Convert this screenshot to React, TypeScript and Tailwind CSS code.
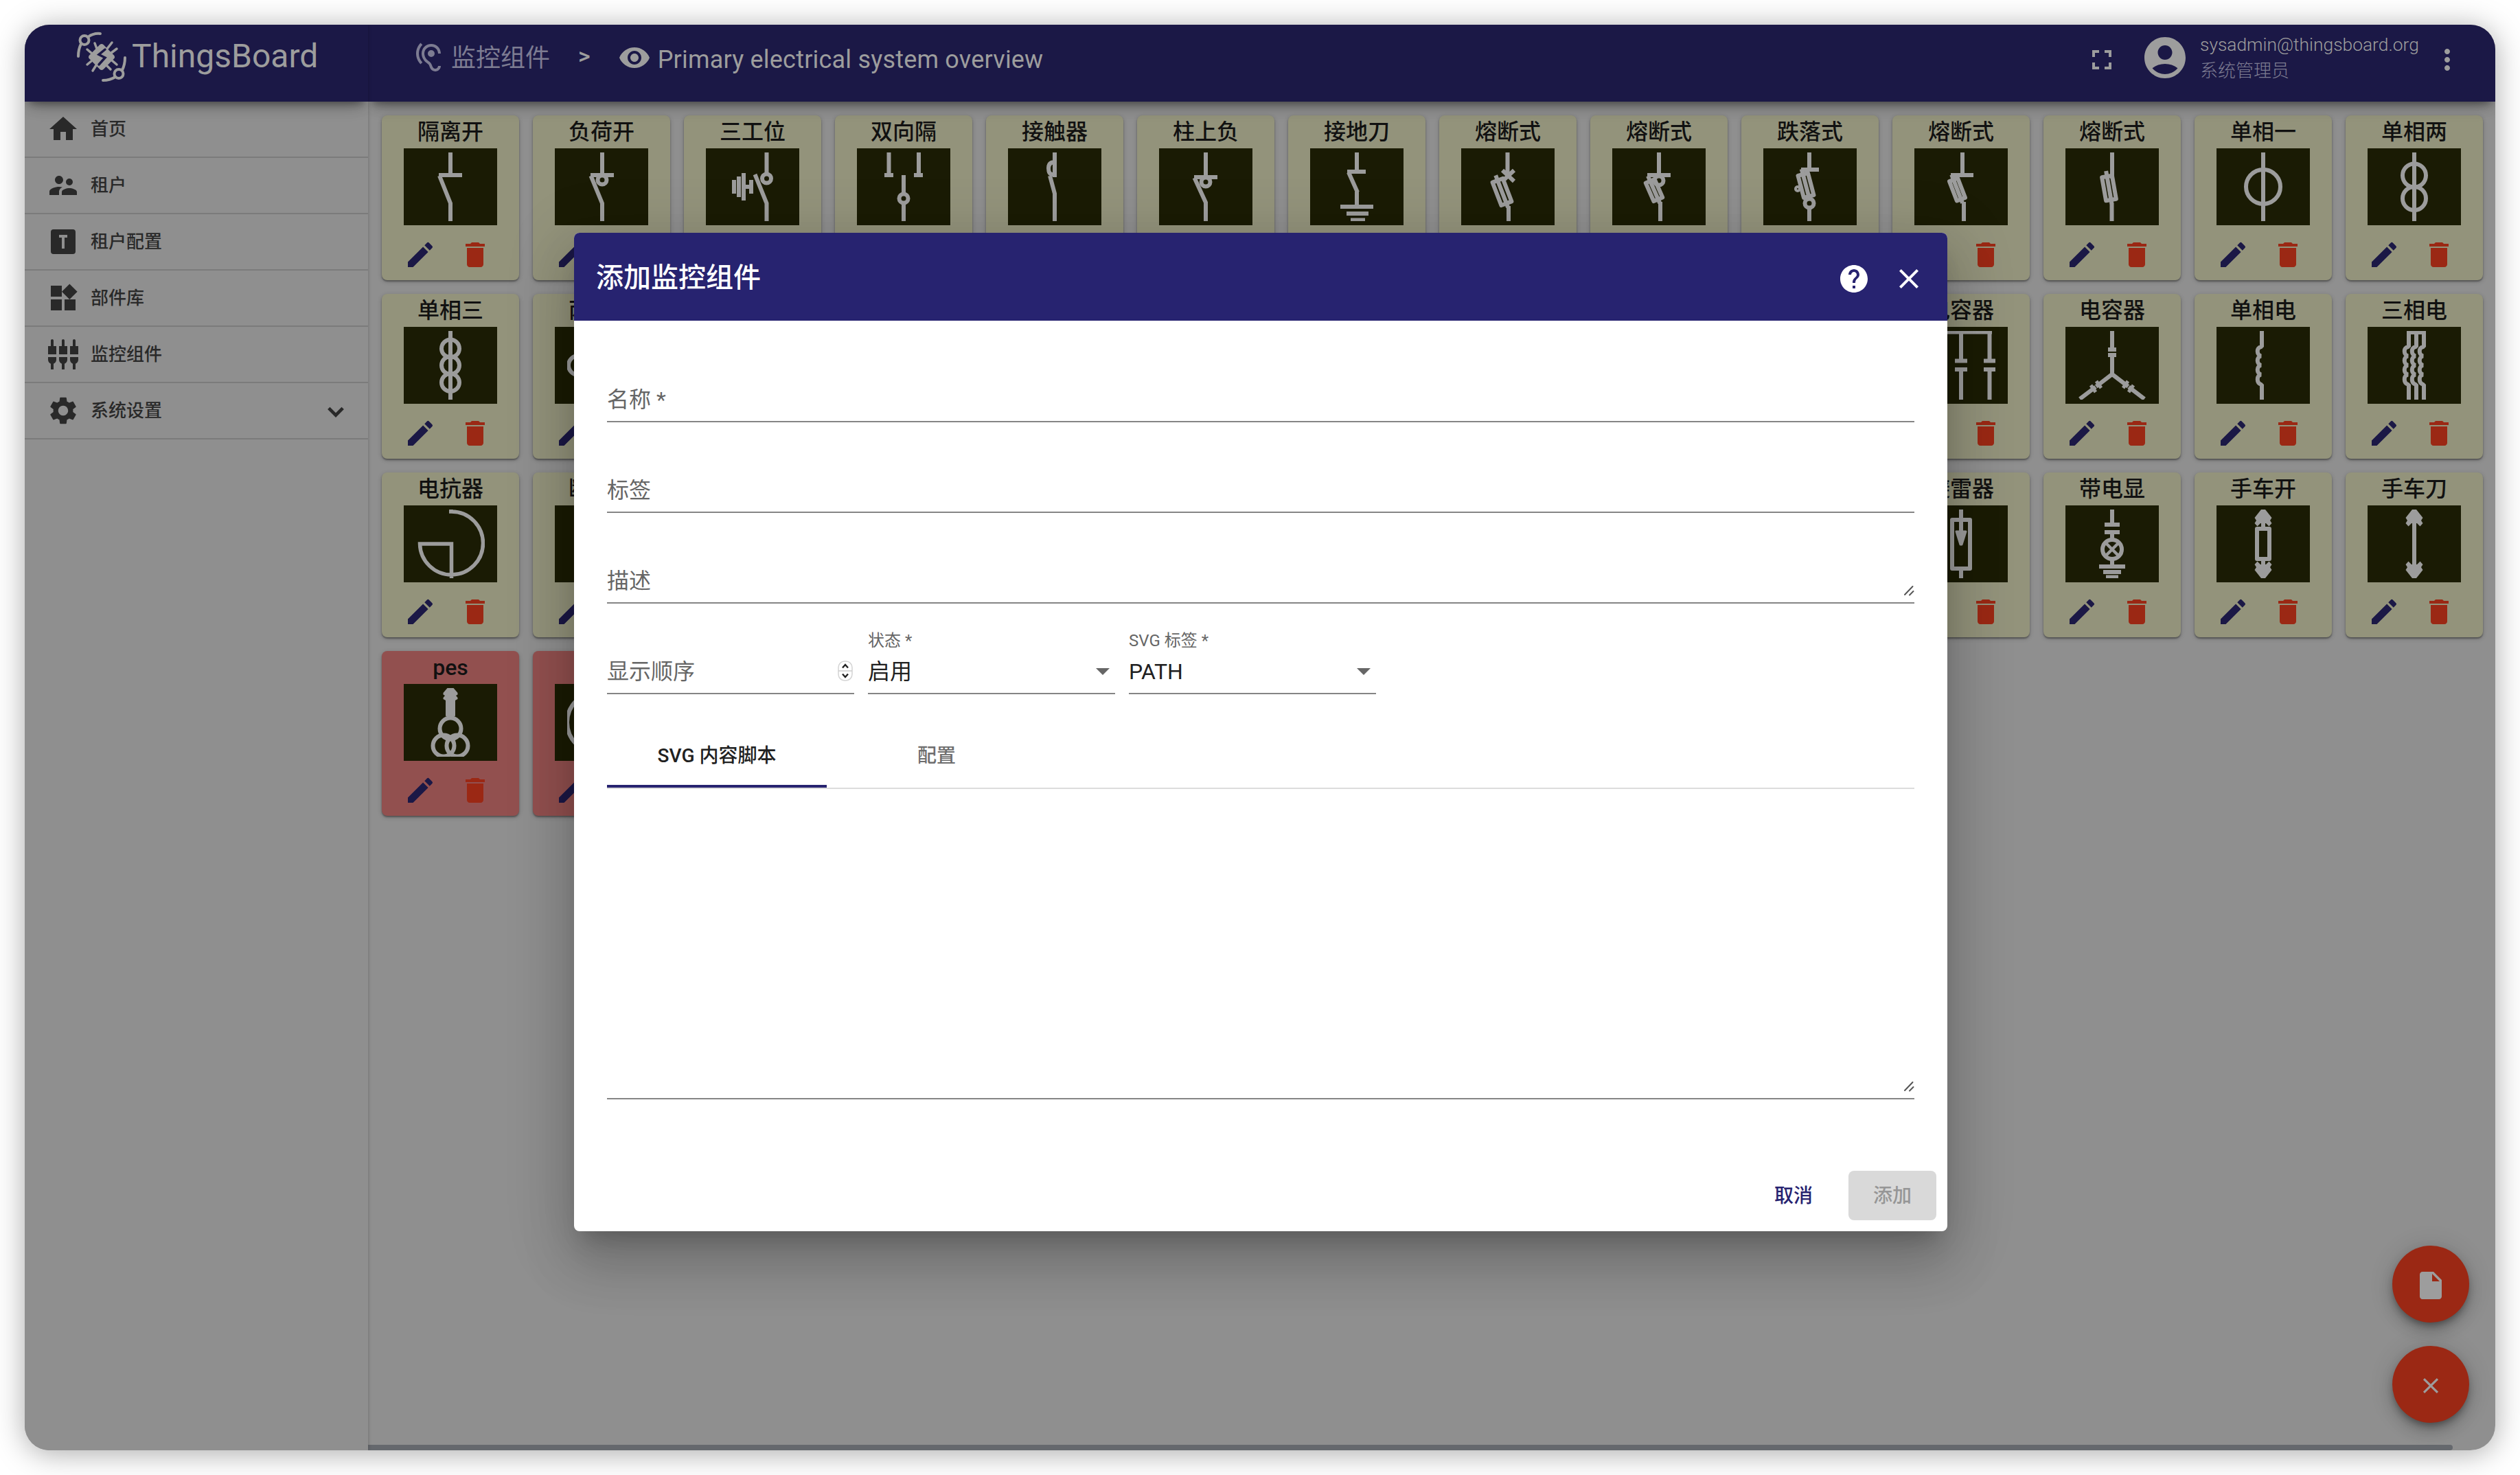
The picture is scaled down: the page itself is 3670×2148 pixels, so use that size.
import React from 'react';
import {
  MdHome,
  MdSupervisorAccount,
  MdWidgets,
  MdSettingsInputComponent,
  MdSettings,
  MdHearing,
  MdVisibility,
  MdFullscreen,
  MdAccountCircle,
  MdMoreVert,
  MdEdit,
  MdDelete,
  MdHelp,
  MdClose,
  MdInsertDriveFile,
} from 'react-icons/md';

const Fuse = ({ x1, y1, x2, y2, w = 16 }: { x1: number; y1: number; x2: number; y2: number; w?: number }) => {
  const len = Math.hypot(x2 - x1, y2 - y1);
  const angle = (Math.atan2(y2 - y1, x2 - x1) * 180) / Math.PI - 90;
  return (
    <g transform={`translate(${x1} ${y1}) rotate(${angle})`} strokeLinejoin="round">
      <rect x={-w / 2} y={3} width={w} height={len - 6} />
      <path d={`M0-5V${len + 3}`} />
    </g>
  );
};

const Coil = ({ x }: { x: number }) => (
  <path
    strokeLinejoin="bevel"
    d={`M${x} 6V29l-1 0c-7 1-7 12 0 13.500c-7 1-7 12 0 13.500c-7 1-7 12 0 13.500c-7 1-7 12 0 14.500l1 0V106`}
  />
);

const ArrowHead = ({ flip = false }: { flip?: boolean }) => (
  <path
    transform={flip ? 'matrix(1 0 0 -1 0 112)' : undefined}
    d="M65 6h6L80.500 18L78 22L80.500 26L76.500 30.500L72 26H64L59.500 30.500L55.500 26L58 22L55.500 18Z"
    fill="currentColor"
    stroke="none"
  />
);

const symbols: Record<string, React.ReactNode> = {
  isolator: <path d="M68 6V39M51 39H85M52 40L68 80V106" />,
  load: (
    <>
      <path d="M69 6V39M52 39H86M52.500 40L69 80V106" />
      <circle cx="69" cy="46" r="6.500" />
    </>
  ),
  threePos: (
    <>
      <path d="M88.500 6V36M71.500 38L88.500 80V106M41 46V66M48 41V71M55 36V76M55 56H66M66 46V66" />
      <circle cx="88.500" cy="44" r="6.500" />
    </>
  ),
  dual: (
    <>
      <path d="M46.500 6V39M90 6V39M40 39H53M83 39H96M68 39V66M68 82V106" />
      <circle cx="68" cy="73" r="6.500" />
    </>
  ),
  contactor: <path d="M68 6V42M68 20Q59 20 59 29Q59 38 65 38M61 40L68 66V106" />,
  poleLoad: (
    <>
      <path d="M68 6V42M51 42H85M51.500 43L68 79V106" />
      <circle cx="68" cy="49" r="6.500" />
    </>
  ),
  earth: <path d="M68 6V34M54 34H81M56 35L69 64M68 63V84M44 85H92M53 95H85M59 104.500H80" />,
  fuseX: (
    <>
      <path d="M67.500 6V36M60 32L77 48M77 32L60 48M69 84V106" />
      <Fuse x1={52} y1={44} x2={67} y2={83} />
    </>
  ),
  fuseCircle: (
    <>
      <path d="M68 6V39M51 39H85M70 78V106" />
      <circle cx="68" cy="47" r="6.500" />
      <Fuse x1={54} y1={45} x2={68} y2={77} w={14} />
    </>
  ),
  drop: (
    <>
      <path d="M67 6V31M55 31H81M67 87V106" />
      <circle cx="67" cy="80" r="6.500" />
      <circle cx="50" cy="59" r="2" />
      <Fuse x1={57} y1={35} x2={67} y2={73} w={15} />
    </>
  ),
  fuseBar: (
    <>
      <path d="M70 6V39M53 39H86M72 78V106" />
      <Fuse x1={56} y1={43} x2={69} y2={77} w={13} />
    </>
  ),
  fuse: (
    <>
      <path d="M68 6V44M67.500 80V106" />
      <Fuse x1={60} y1={38} x2={67} y2={78} w={15} />
    </>
  ),
  one: (
    <>
      <path d="M68 6V106" />
      <circle cx="68" cy="56" r="25" />
    </>
  ),
  two: (
    <>
      <path d="M68 6V106" />
      <circle cx="68" cy="39.500" r="17" />
      <circle cx="68" cy="73" r="17" />
    </>
  ),
  three: (
    <>
      <path d="M68 6V106" />
      <circle cx="68" cy="31.500" r="13" />
      <circle cx="68" cy="56" r="13" />
      <circle cx="68" cy="81" r="13" />
    </>
  ),
  smallRing: <circle cx="34" cy="56" r="14" />,
  bigRing: <circle cx="62" cy="56" r="44" />,
  capacitors: (
    <path d="M23 7.500H113M26.500 6V49M68 6V49M109.500 6V49M18 49.500H35M59 49.500H77M101 49.500H118M18 62H35M59 62H77M101 62H118M26.500 62V106M68 62V106M109.500 62V106" />
  ),
  capStar: (
    <g>
      <path d="M68 6V33M68 41V69L21 105M68 69L115 105M62 33H74M62 41H74" />
      <path d="M45 79L52 89M37 85L44 95M91 79L84 89M99 85L92 95" strokeWidth="5" />
      <path d="M41 83L48 92M95 83L88 92" stroke="#1a1b04" strokeWidth="1.200" />
    </g>
  ),
  coil: <Coil x={66} />,
  coils: (
    <>
      <path d="M57 8H85" />
      <Coil x={60} />
      <Coil x={71} />
      <Coil x={82} />
    </>
  ),
  reactor: <path d="M66 9H69.500A46 46 0 1 1 23.500 56H69.500V106M69 6V10" strokeWidth="5.500" />,
  arrester: (
    <>
      <path d="M68 6V40M68 95V106" />
      <rect x="55" y="21" width="26" height="71" strokeLinejoin="round" />
      <path d="M61 38H75L69 57H67Z" fill="currentColor" strokeWidth="3" strokeLinejoin="round" />
    </>
  ),
  lamp: (
    <>
      <path d="M68 6V28M57 28H79M57 39H79M68 39V50M68 79V88M49 89H87M55 97H81M59 104.500H77" />
      <circle cx="68" cy="64" r="14" />
      <path d="M58 54L78 74M78 54L58 74" strokeWidth="4.500" />
    </>
  ),
  cart: (
    <>
      <path d="M68 20V34M68 78V92" />
      <rect x="59" y="34" width="18" height="44" strokeLinejoin="round" />
      <ArrowHead />
      <ArrowHead flip />
    </>
  ),
  cartKnife: (
    <>
      <path d="M68 8V104" />
      <ArrowHead />
      <ArrowHead flip />
    </>
  ),
  pes: (
    <>
      <path
        d="M63.500 6H72.500L78.500 13V15.500L76 17L78.500 20V22L75 24V46Q75 47.500 73.500 47.500H62.500Q61 47.500 61 46V24L57.500 22V20L60 17L57.500 15.500V13Z"
        fill="currentColor"
        stroke="none"
      />
      <circle cx="68" cy="65" r="15.500" />
      <circle cx="58" cy="90" r="15.500" />
      <circle cx="78" cy="90" r="15.500" />
    </>
  ),
};

type CardData = { title: string; symbol?: string; red?: boolean } | null;

const hidden: CardData[] = Array(8).fill(null);

const cards: CardData[] = [
  { title: '隔离开', symbol: 'isolator' },
  { title: '负荷开', symbol: 'load' },
  { title: '三工位', symbol: 'threePos' },
  { title: '双向隔', symbol: 'dual' },
  { title: '接触器', symbol: 'contactor' },
  { title: '柱上负', symbol: 'poleLoad' },
  { title: '接地刀', symbol: 'earth' },
  { title: '熔断式', symbol: 'fuseX' },
  { title: '熔断式', symbol: 'fuseCircle' },
  { title: '跌落式', symbol: 'drop' },
  { title: '熔断式', symbol: 'fuseBar' },
  { title: '熔断式', symbol: 'fuse' },
  { title: '单相一', symbol: 'one' },
  { title: '单相两', symbol: 'two' },
  { title: '单相三', symbol: 'three' },
  { title: '两相三', symbol: 'smallRing' },
  ...hidden,
  { title: '电容器', symbol: 'capacitors' },
  { title: '电容器', symbol: 'capStar' },
  { title: '单相电', symbol: 'coil' },
  { title: '三相电', symbol: 'coils' },
  { title: '电抗器', symbol: 'reactor' },
  { title: '断路器' },
  ...hidden,
  { title: '避雷器', symbol: 'arrester' },
  { title: '带电显', symbol: 'lamp' },
  { title: '手车开', symbol: 'cart' },
  { title: '手车刀', symbol: 'cartKnife' },
  { title: 'pes', symbol: 'pes', red: true },
  { title: '', symbol: 'bigRing', red: true },
];

function Card({ card }: { card: CardData }) {
  if (!card) return <div />;
  return (
    <div
      className={`flex h-[240px] flex-col items-center rounded-[8px] shadow-[0_2px_2px_rgba(0,0,0,0.3),0_2px_6px_rgba(0,0,0,0.22)] ${
        card.red ? 'bg-[#92504f]' : 'bg-[#93937b]'
      }`}
    >
      <div className="h-[48px] text-[32px] leading-[48px] font-medium whitespace-nowrap text-[#111]">{card.title}</div>
      <div className="flex h-[112px] w-[136px] items-center justify-center bg-[#1a1b04] text-[#9c9c9c]">
        {card.symbol && (
          <svg className="h-[100px] w-[100px]" viewBox="18 6 100 100" fill="none" stroke="currentColor" strokeWidth="6">
            {symbols[card.symbol]}
          </svg>
        )}
      </div>
      <div className="mt-[19px] ml-8 flex gap-8 self-start">
        <MdEdit className="size-12 text-[#1b1846]" />
        <MdDelete className="size-12 text-[#9b2814]" />
      </div>
    </div>
  );
}

const TenantProfileIcon = ({ className }: { className?: string }) => (
  <svg className={className} viewBox="0 0 24 24" fill="currentColor">
    <path d="M9 7V9H11V17H13V9H15V7H9M5 3H19A2 2 0 0 1 21 5V19A2 2 0 0 1 19 21H5A2 2 0 0 1 3 19V5A2 2 0 0 1 5 3Z" />
  </svg>
);

const menu = [
  { icon: MdHome, label: '首页' },
  { icon: MdSupervisorAccount, label: '租户' },
  { icon: TenantProfileIcon, label: '租户配置' },
  { icon: MdWidgets, label: '部件库' },
  { icon: MdSettingsInputComponent, label: '监控组件' },
  { icon: MdSettings, label: '系统设置', expandable: true },
];

const Logo = () => (
  <svg className="size-[76px]" viewBox="0 0 76 76" fill="none" stroke="currentColor" strokeWidth="4" strokeLinecap="round">
    <circle cx="13" cy="13.500" r="6.500" />
    <path d="M18 9Q26 3 36 4M8 19Q4 27 4 37" />
    <circle cx="63" cy="62.500" r="6.500" />
    <path d="M58 67Q50 72 40 72M68 57Q72 49 72 39" />
    <path
      d="M53 17L46 26M60 26L52 32M60 49L53 43M51 56L45 50M25 58L30 50M17 49L23 44M17 27L24 33M28 18L31 26"
      strokeWidth="3.500"
    />
    <rect x="23.500" y="23.500" width="29" height="29" rx="4" transform="rotate(45 38 38)" fill="currentColor" stroke="none" />
    <path d="M43 27L34 34.500L43 39L34 49" stroke="#1b1846" strokeWidth="3.500" />
  </svg>
);

const ResizeGrip = () => (
  <svg className="h-[16px] w-[16px] text-[#555]" viewBox="0 0 16 16" stroke="currentColor" strokeWidth="2" strokeLinecap="round">
    <path d="M2 14L13.500 2M9 14.500L14.500 9" />
  </svg>
);

const Select = ({ label, value }: { label: string; value: string }) => (
  <div className="flex h-[132px] w-[360px] flex-col justify-end border-b-2 border-[#858585] pb-[13px]">
    <div className="text-[24px] leading-[28px] text-[#666]">{label}</div>
    <div className="mt-[13px] flex items-center justify-between pr-2">
      <span className="text-[32px] leading-[36px] text-[#212121]">{value}</span>
      <svg className="h-[10px] w-[20px]" viewBox="0 0 20 10" fill="#666">
        <path d="M0 0H20L10 10Z" />
      </svg>
    </div>
  </div>
);

function Dialog() {
  return (
    <div className="absolute top-[303px] left-[800px] flex h-[1454px] w-[2000px] flex-col overflow-visible rounded-[8px] bg-white shadow-[0_22px_30px_-14px_rgba(0,0,0,0.2),0_48px_76px_6px_rgba(0,0,0,0.14),0_18px_92px_16px_rgba(0,0,0,0.12)]">
      <div className="flex h-[128px] shrink-0 items-center rounded-t-[8px] bg-[#272370] pr-8 pl-8 text-white">
        <h2 className="flex-1 pt-[3px] text-[40px] font-medium">添加监控组件</h2>
        <MdHelp className="mt-[6px] size-12" />
        <MdClose className="mt-[6px] ml-8 size-12" />
      </div>
      <div className="flex flex-1 flex-col px-12 pt-4">
        <div className="flex h-[132px] items-end border-b-2 border-[#858585] pb-[13px] text-[32px] leading-[36px] text-[#666]">
          名称 *
        </div>
        <div className="flex h-[132px] items-end border-b-2 border-[#858585] pb-[13px] text-[32px] leading-[36px] text-[#666]">
          标签
        </div>
        <div className="flex h-[132px] items-end justify-between border-b-2 border-[#858585] text-[32px] leading-[36px] text-[#666]">
          <span className="pb-[13px]">描述</span>
          <div className="pb-[9px]">
            <ResizeGrip />
          </div>
        </div>
        <div className="flex gap-5">
          <div className="flex h-[132px] w-[360px] items-end justify-between border-b-2 border-[#858585] pr-[2px] pb-[13px] text-[32px] leading-[36px] text-[#666]">
            显示顺序
            <svg className="mb-[4px] h-[30px] w-[22px]" viewBox="0 0 22 30" fill="none">
              <rect x="1" y="1" width="20" height="28" rx="9" fill="#fff" stroke="#d4d4d4" strokeWidth="1.500" />
              <path d="M1 15H21" stroke="#ccc" strokeWidth="1.500" />
              <path d="M7 10.500L11 6L15 10.500M7 19.500L11 24L15 19.500" stroke="#222" strokeWidth="2.400" />
            </svg>
          </div>
          <Select label="状态 *" value="启用" />
          <Select label="SVG 标签 *" value="PATH" />
        </div>
        <div className="mt-10 flex h-[98px] shrink-0 border-b-2 border-[#dcdcdc] text-[28px] font-medium">
          <div className="flex h-[96px] w-[320px] items-center justify-center border-b-4 border-[#272370] pt-[7px] text-[#212121]">
            SVG 内容脚本
          </div>
          <div className="flex h-[96px] w-[320px] items-center justify-center border-b-4 border-transparent pt-[7px] text-[#6e6e6e]">
            配置
          </div>
        </div>
        <div className="flex h-[452px] items-end justify-end border-b-2 border-[#858585] pb-[9px]">
          <ResizeGrip />
        </div>
      </div>
      <div className="flex justify-end gap-4 p-4 text-[28px] font-medium">
        <button className="h-[72px] w-[128px] pt-[2px] text-[#272370]">取消</button>
        <button className="h-[72px] w-[128px] rounded-[8px] bg-[#d9d9d9] pt-[2px] text-[#969696]">添加</button>
      </div>
    </div>
  );
}

export default function App() {
  return (
    <div className="h-[2148px] w-[3670px] overflow-hidden bg-white p-9 font-['Roboto','Noto_Sans_CJK_SC',sans-serif]">
      <div className="h-[2076px] w-[3598px] rounded-[36px] shadow-[0_4px_44px_rgba(0,0,0,0.34)]">
        <div className="relative flex h-full w-full overflow-hidden rounded-[36px] bg-[#8f8f8f]">
          <aside className="z-10 flex w-[500px] shrink-0 flex-col overflow-hidden bg-[#8f8f8f] shadow-[0_0_5px_rgba(0,0,0,0.25)]">
            <div className="flex h-[112px] shrink-0 items-start bg-[#1b1846] pt-[9px] pl-[74px] text-[#9d9d9d] shadow-[0_8px_10px_-6px_rgba(0,0,0,0.25),0_12px_18px_-8px_rgba(0,0,0,0.3),0_6px_28px_-6px_rgba(0,0,0,0.2)]">
              <Logo />
              <span className="ml-[6px] pt-[7px] text-[48px] leading-[60px]">ThingsBoard</span>
            </div>
            <nav>
              {menu.map(({ icon: Icon, label, expandable }) => (
                <div key={label} className="flex h-[82px] items-center border-b-2 border-[#7b7b7b] pr-[23px] pl-8 text-[#292929]">
                  <Icon className="size-12" />
                  <span className="ml-4 flex-1 text-[26px] leading-[32px] font-medium">{label}</span>
                  {expandable && (
                    <svg className="mt-[3px] size-12" viewBox="0 0 24 24" fill="none" stroke="currentColor" strokeWidth="2.400">
                      <path d="M6.900 9.200L12 14.300L17.100 9.200" />
                    </svg>
                  )}
                </div>
              ))}
            </nav>
          </aside>
          <div className="flex min-w-0 flex-1 flex-col">
            <header className="relative flex h-[112px] shrink-0 items-center bg-[#1b1846] pr-[46px] pb-[16px] pl-[64px] text-[#9d9d9d] shadow-[0_8px_10px_-6px_rgba(0,0,0,0.25),0_12px_18px_-8px_rgba(0,0,0,0.3),0_6px_28px_-6px_rgba(0,0,0,0.2)]">
              <MdHearing className="size-12 text-[#7d7c92]" />
              <span className="ml-[9px] pt-[2px] text-[36px] text-[#7d7c92]">监控组件</span>
              <span className="mb-[6px] ml-[41px] text-[34px] font-medium">&gt;</span>
              <MdVisibility className="ml-[40px] size-12" />
              <span className="ml-[10px] pt-[6px] text-[36px] tracking-[0.2px]">Primary electrical system overview</span>
              <div className="flex-1" />
              <MdFullscreen className="mt-[6px] size-12" />
              <MdAccountCircle className="ml-8 size-[72px]" />
              <div className="ml-[15px] flex w-[320px] flex-col font-light">
                <span className="text-[26.4px] leading-[38px]">sysadmin@thingsboard.org</span>
                <span className="text-[26px] leading-[38px] text-[#7d7c92]">系统管理员</span>
              </div>
              <MdMoreVert className="mt-[6px] ml-4 size-12" />
            </header>
            <main className="grid grid-cols-[repeat(14,200px)] gap-5 p-5">
              {cards.map((card, i) => (
                <Card key={i} card={card} />
              ))}
            </main>
          </div>
          <div className="absolute right-[38px] bottom-[40px] z-10 flex flex-col gap-[34px] text-[#9d9d9d]">
            <div className="flex size-[112px] items-center justify-center rounded-full bg-[#9b2814] pt-1 shadow-[0_6px_10px_-2px_rgba(0,0,0,0.3),0_12px_20px_rgba(0,0,0,0.18),0_2px_36px_rgba(0,0,0,0.14)]">
              <MdInsertDriveFile className="size-12" />
            </div>
            <div className="flex size-[112px] items-center justify-center rounded-full bg-[#9b2814] pt-1 shadow-[0_6px_10px_-2px_rgba(0,0,0,0.3),0_12px_20px_rgba(0,0,0,0.18),0_2px_36px_rgba(0,0,0,0.14)]">
              <MdClose className="size-[38px]" />
            </div>
          </div>
          <div className="absolute bottom-0 left-[500px] h-[8px] w-[3036px] rounded-r-[4px] bg-[#65686d]" />
          <div className="absolute inset-0 z-20">
            <Dialog />
          </div>
        </div>
      </div>
    </div>
  );
}
